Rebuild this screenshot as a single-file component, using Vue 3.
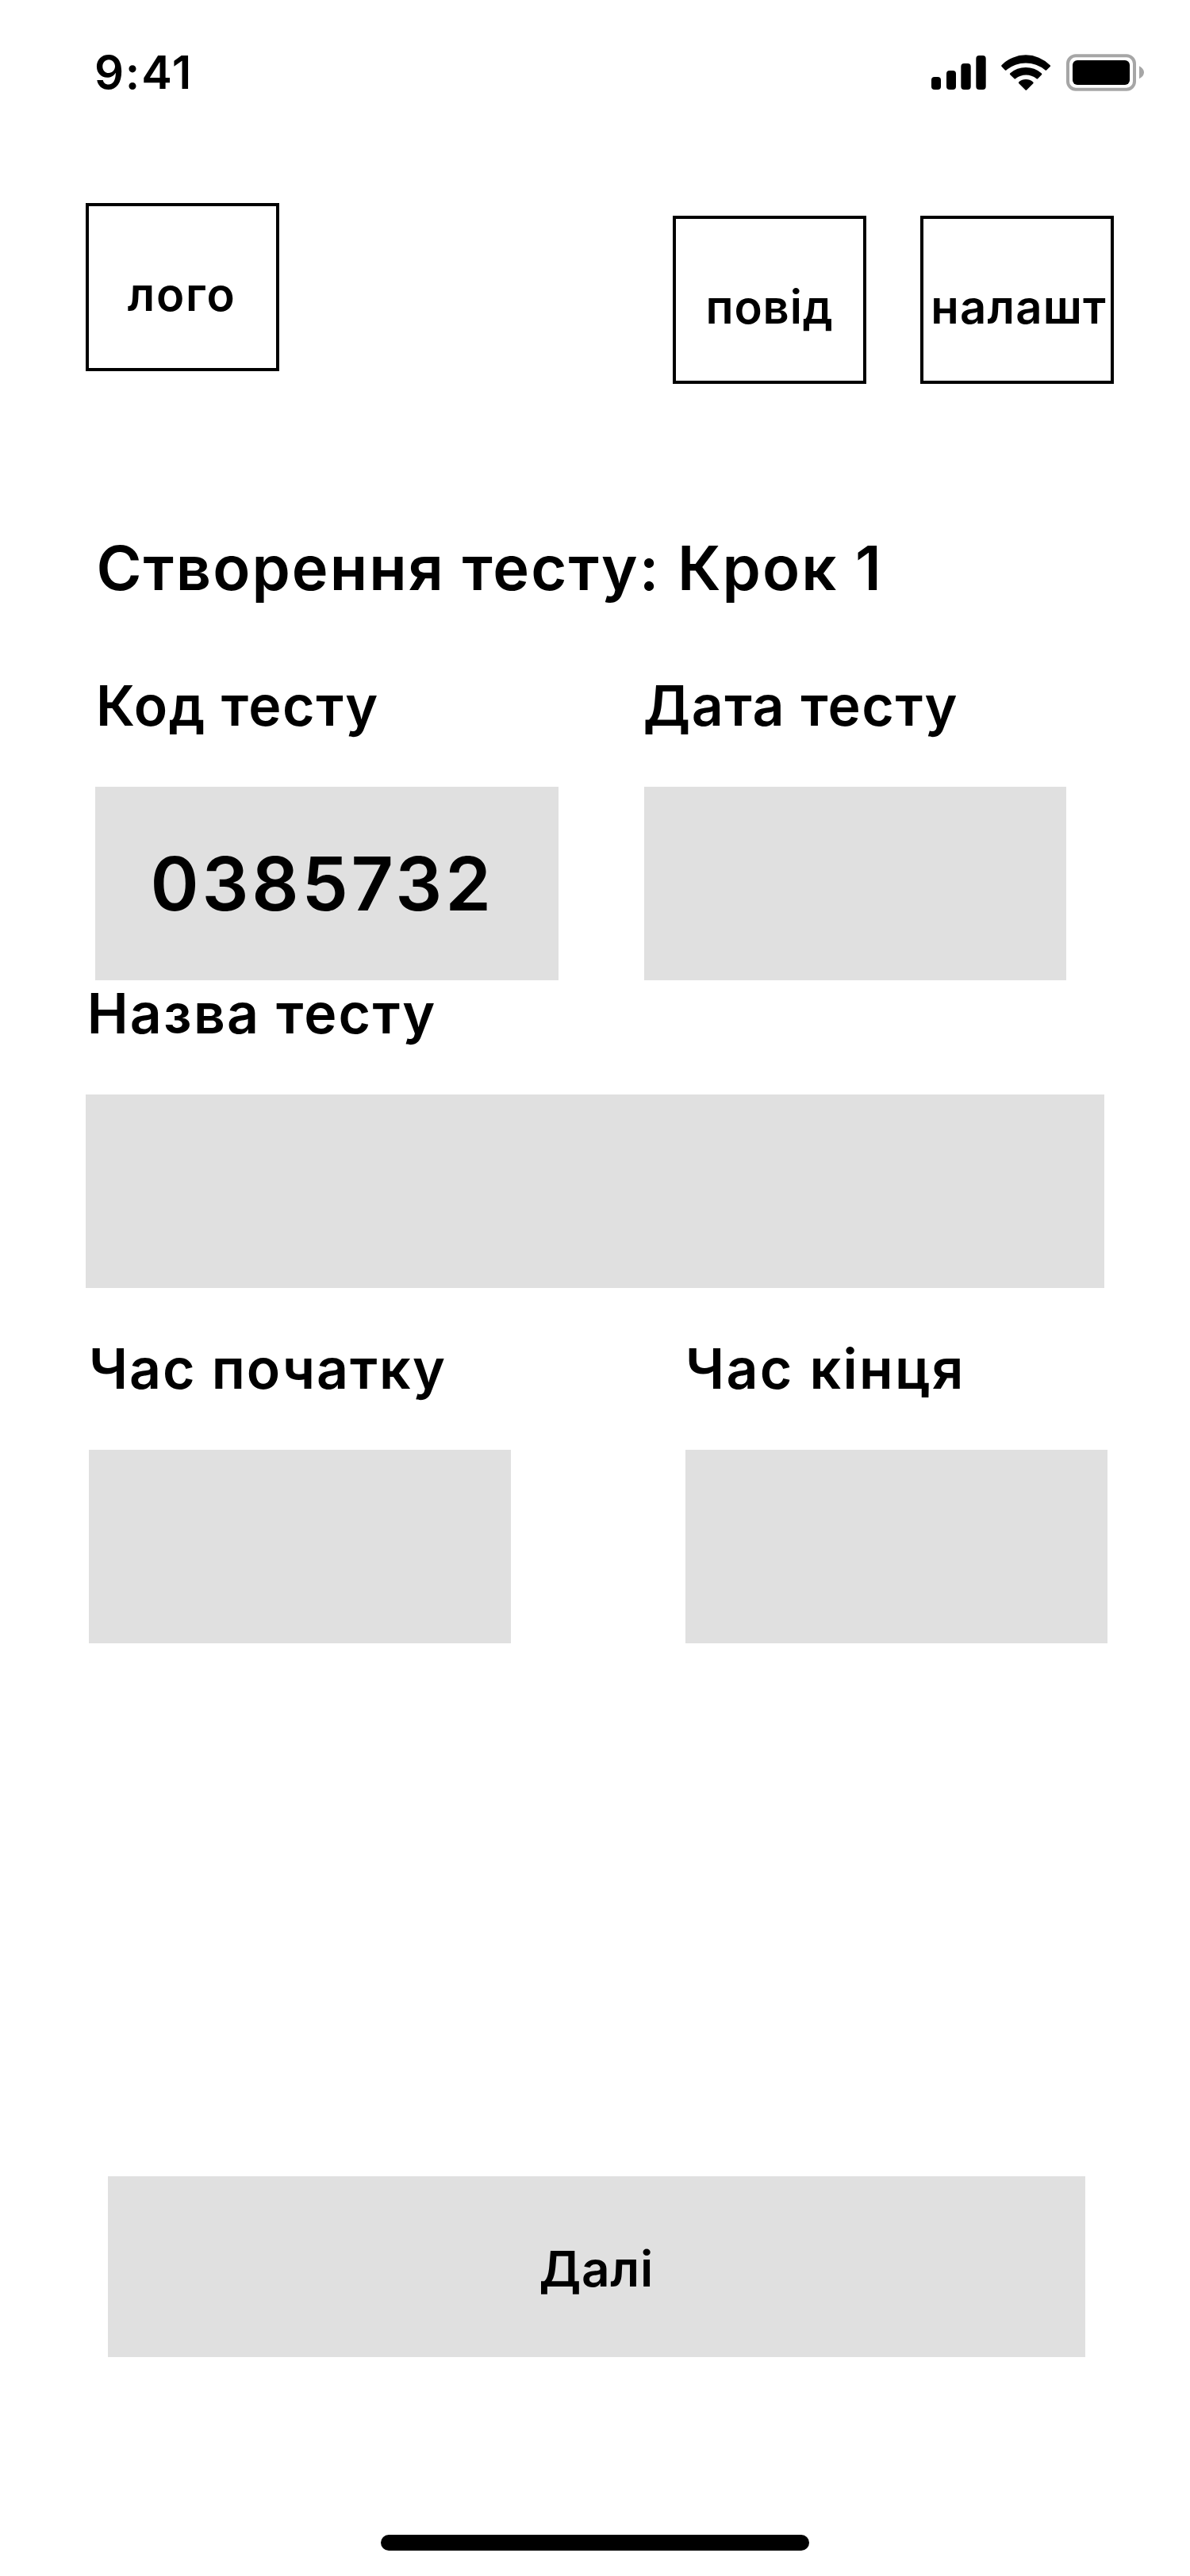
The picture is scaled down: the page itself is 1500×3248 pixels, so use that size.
<script setup>
const title = 'Створення тесту: Крок 1'
const testCode = '0385732'
</script>

<template>
  <main class="screen">
    <div class="status">
      <span class="time">9:41</span>
      <svg class="indicators" viewBox="0 0 960 240" aria-hidden="true">
        <g class="ink">
          <rect x="72" y="141" width="36" height="48" rx="12" />
          <rect x="129" y="117" width="36" height="72" rx="12" />
          <rect x="184" y="90" width="37" height="99" rx="12" />
          <rect x="241" y="60" width="37" height="129" rx="12" />
          <path d="M338 96 A128 128 0 0 1 520 96 Q524 99 521 102 L508 115 Q505 118 502 115 A114 114 0 0 0 356 115 Q353 118 350 115 L338 102 Q335 99 338 96Z" />
          <path d="M370 127 A89 89 0 0 1 488 127 Q492 130 489 133 L475 147 Q472 150 469 147 A63 63 0 0 0 391 147 Q388 150 385 147 L370 133 Q367 130 370 127Z" />
          <path d="M403 160 A41 41 0 0 1 456 160 Q460 163 457 166 L433 190 Q430 193 427 190 L403 166 Q400 163 403 160Z" />
          <rect x="606" y="78" width="216" height="93" rx="18" />
        </g>
        <rect class="shell" x="588" y="61" width="252" height="127" rx="30" />
        <path class="nub" d="M858 100 C870 106 876 115 876 124 C876 133 870 142 858 148Z" />
      </svg>
    </div>

    <header class="header">
      <div class="box logo">лого</div>
      <nav class="actions">
        <div class="box notify">повід</div>
        <div class="box settings">налашт</div>
      </nav>
    </header>

    <h1 class="title">{{ title }}</h1>

    <div class="row first">
      <section class="group code">
        <div class="label">Код тесту</div>
        <div class="field value">{{ testCode }}</div>
      </section>
      <section class="group date">
        <div class="label">Дата тесту</div>
        <div class="field"></div>
      </section>
    </div>

    <section class="group name">
      <div class="label">Назва тесту</div>
      <div class="field"></div>
    </section>

    <div class="row times">
      <section class="group start">
        <div class="label">Час початку</div>
        <div class="field"></div>
      </section>
      <section class="group end">
        <div class="label">Час кінця</div>
        <div class="field"></div>
      </section>
    </div>

    <div class="next" role="button">Далі</div>
    <div class="home"></div>
  </main>
</template>

<style>
body {
  margin: 0;
  background: #fff;
}
</style>

<style scoped>
.screen {
  box-sizing: border-box;
  width: 1500px;
  height: 3248px;
  overflow: hidden;
  background: #fff;
  color: #000;
  font-family: Inter, sans-serif;
  font-weight: 600;
  white-space: nowrap;
}
.status {
  box-sizing: border-box;
  display: flex;
  justify-content: space-between;
  align-items: flex-start;
  height: 256px;
  padding: 50px 30px 0 119px;
}
.time {
  margin-top: 6px;
  font-size: 58px;
  line-height: 70px;
  letter-spacing: 1.77px;
}
.indicators {
  width: 320px;
  height: 80px;
}
.ink {
  fill: #000;
}
.shell {
  fill: none;
  stroke: #a6a6a6;
  stroke-width: 12;
}
.nub {
  fill: #a6a6a6;
}
.header {
  display: flex;
  justify-content: space-between;
  align-items: flex-start;
  height: 228px;
  padding: 0 96px 0 108px;
}
.actions {
  display: flex;
  gap: 68px;
  padding-top: 16px;
}
.box {
  box-sizing: border-box;
  width: 244px;
  height: 212px;
  border: 4px solid #000;
  padding-top: 76px;
  font-size: 58px;
  line-height: 70px;
}
.logo {
  padding-left: 48.7px;
  letter-spacing: 1.75px;
}
.notify {
  padding-left: 37.4px;
  letter-spacing: 0.9px;
}
.settings {
  padding-left: 9.3px;
  letter-spacing: 1.2px;
}
.title {
  margin: 184px 0 0 121.4px;
  font-size: 77.5px;
  font-weight: 600;
  line-height: 96px;
  letter-spacing: 2.06px;
}
.row {
  display: flex;
}
.first {
  margin-top: 84px;
  padding-left: 120px;
  gap: 108px;
}
.group {
  display: flex;
  flex-direction: column;
  gap: 60px;
}
.label {
  height: 84px;
  font-size: 69.7px;
  line-height: 84px;
}
.field {
  height: 244px;
  background: #e0e0e0;
}
.code {
  width: 584px;
}
.code .label {
  padding-left: 1px;
  letter-spacing: 1.5px;
}
.value {
  box-sizing: border-box;
  padding: 66px 0 0 69.4px;
  font-size: 92.8px;
  line-height: 112px;
  letter-spacing: 3.8px;
}
.date {
  width: 532px;
}
.date .label {
  margin-left: -1.2px;
  letter-spacing: 1.5px;
}
.name {
  width: 1284px;
  margin-left: 108px;
}
.name .label {
  padding-left: 1.7px;
  letter-spacing: 2.21px;
}
.times {
  margin-top: 60px;
  padding-left: 112px;
  gap: 220px;
}
.start,
.end {
  width: 532px;
}
.start .label {
  letter-spacing: 1.88px;
}
.end .label {
  letter-spacing: 2.31px;
}
.next {
  box-sizing: border-box;
  width: 1232px;
  height: 228px;
  margin: 672px 0 0 136px;
  padding: 79px 0 0 543.4px;
  background: #e0e0e0;
  font-size: 62px;
  line-height: 76px;
  letter-spacing: 0.75px;
}
.home {
  width: 540px;
  height: 20px;
  margin: 224px auto 0;
  border-radius: 10px;
  background: #000;
}
</style>
